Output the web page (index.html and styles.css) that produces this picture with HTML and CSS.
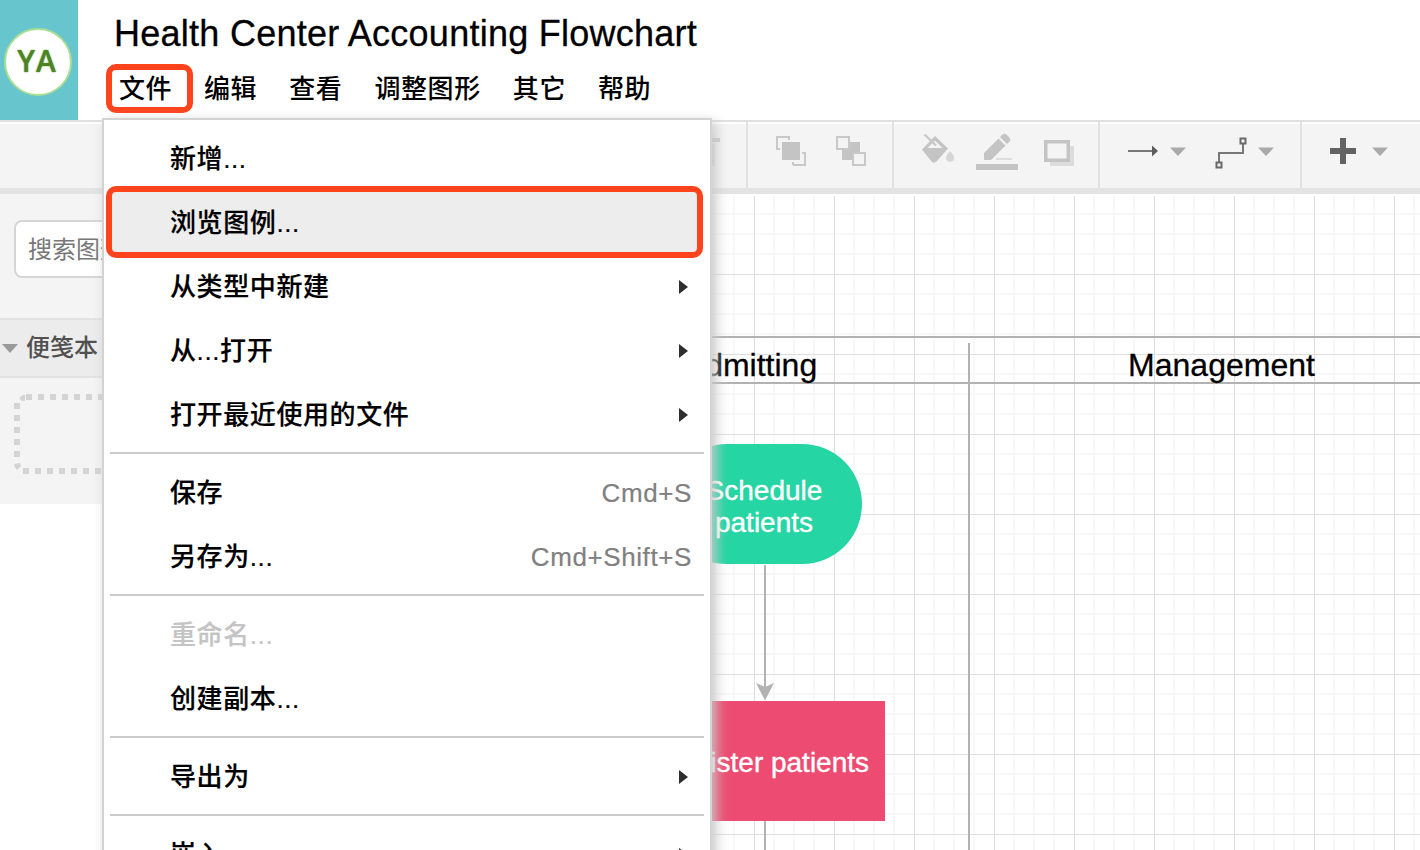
FILE: index.html
```html
<!DOCTYPE html>
<html lang="zh-CN">
<head>
<meta charset="utf-8">
<title>Health Center Accounting Flowchart</title>
<link rel="stylesheet" href="styles.css">
</head>
<body>
<div class="app">
  <header class="header">
    <div class="logo"><span class="avatar">YA</span></div>
    <div class="heading">
      <h1 class="title">Health Center Accounting Flowchart</h1>
      <nav class="menubar">
        <span class="menubar-item marked">文件</span>
        <span class="menubar-item">编辑</span>
        <span class="menubar-item">查看</span>
        <span class="menubar-item">调整图形</span>
        <span class="menubar-item">其它</span>
        <span class="menubar-item">帮助</span>
      </nav>
    </div>
  </header>

  <div class="toolbar">
    <div class="group group-edit">
      <svg width="46" height="64" viewBox="700 124 46 64"><path d="M700 138h20v4h-20z" fill="#ccc"/><path d="M702 144h13v22h-13z" fill="#ddd"/></svg>
    </div>
    <div class="group group-order">
      <svg width="144" height="64" viewBox="748 124 144 64" fill="none" stroke="#c8c8c8" stroke-width="2">
        <path d="M789 140v-3h-12v12h3M793 165h12v-12h-3M793 165v-3"/>
        <path d="M782 142h18v18h-18z" fill="#c4c4c4" stroke="none"/>
        <path d="M842 142h18v18h-18z" fill="#c4c4c4" stroke="none"/>
        <path d="M837 137h12v12h-12zM853 153h12v12h-12z" fill="#f4f4f4"/>
      </svg>
    </div>
    <div class="group group-style">
      <svg width="204" height="64" viewBox="894 124 204 64" fill="none">
        <path d="M935 136l13 12.500-11.500 13q-2.500 2-5 0L922 149.500z" fill="#c4c4c4"/>
        <path d="M935 140.500l7.500 7.500h-15z" fill="#f4f4f4"/>
        <path d="M924.500 134.500l11.500 11" stroke="#c8c8c8" stroke-width="2.400"/>
        <path d="M950 151c2.500 3 4 4.500 4 6.800a4 4 0 0 1-8 0c0-2.300 1.500-3.800 4-6.800z" fill="#d6d6d6"/>
        <path d="M984 160v-7l14.500-14.500 7 7L991 160zM1000 137l2.500-2.500q2-1.500 4 0l3 3q1.500 2 0 4L1007 144z" fill="#c4c4c4"/>
        <path d="M996 158h16v2h-16z" fill="#ddd"/>
        <path d="M976 164h42v6h-42z" fill="#c4c4c4"/>
        <path d="M1050 146h24v20h-24z" fill="#dcdcdc"/>
        <path d="M1045.750 141.750h22.500v18.500h-22.500z" fill="#f4f4f4" stroke="#c4c4c4" stroke-width="3.500"/>
      </svg>
    </div>
    <div class="group group-edge">
      <svg width="200" height="64" viewBox="1100 124 200 64" fill="none" stroke="#777" stroke-width="2">
        <path d="M1128 151h26"/><path d="M1152 145.500l6 5.500-6 5.500z" fill="#5d5d5d" stroke="none"/>
        <path d="M1170 147.500h16l-8 8.500zM1258 147.500h16l-8 8.500z" fill="#aaa" stroke="none"/>
        <path d="M1219 162v-9h24v-9"/>
        <path d="M1240.500 138.500h5v5h-5zM1216.500 162.500h5v5h-5z" stroke="#686868"/>
      </svg>
    </div>
    <div class="group group-insert">
      <svg width="118" height="64" viewBox="1302 124 118 64">
        <path d="M1340 138h6v10h10v6h-10v10h-6v-10h-10v-6h10z" fill="#636363"/>
        <path d="M1372 147.500h16l-8 8.500z" fill="#aaa"/>
      </svg>
    </div>
  </div>

  <main class="workspace">
    <aside class="sidebar">
      <div class="search">搜索图形</div>
      <div class="section"><svg class="caret" width="16" height="9" viewBox="0 0 16 9"><path d="M0 0h16L8 9z" fill="#999"/></svg><span>便笺本</span></div>
      <div class="scratchpad">
        <svg width="400" height="80" viewBox="14 394 400 80" fill="none" stroke="#d4d4d4" stroke-width="6">
          <path d="M26 397H410" stroke-dasharray="6"/>
          <path d="M23 471H410" stroke-dasharray="6"/>
          <path d="M17 403V462" stroke-dasharray="6"/>
          <path d="M19 398l4-3 2 0v6h-3zM14 464l6-1 1 3-4 4q-3-3-3-6z" fill="#d4d4d4" stroke="none"/>
        </svg>
      </div>
    </aside>
    <svg class="canvas" width="996" height="656" viewBox="424 194 996 656">
      <defs>
        <pattern id="grid" x="754" y="274" width="80" height="80" patternUnits="userSpaceOnUse">
          <path d="M20 0v80M40 0v80M60 0v80M0 20h80M0 40h80M0 60h80" stroke="#f8f8f8" stroke-width="2"/>
          <path d="M.5 0v80M0 .5h80" stroke="#dedede"/>
        </pattern>
      </defs>
      <rect x="424" y="196" width="996" height="654" fill="url(#grid)"/>
      <path d="M424 337H1420M424 383H1420M969 343V850" stroke="#b2b2b2" stroke-width="2"/>
      <g class="lane-title">
        <text x="750.500" y="376">Admitting</text>
        <text x="1221.500" y="376">Management</text>
      </g>
      <path d="M765 565V690M765 821V850" stroke="#b2b2b2" stroke-width="2"/>
      <path d="M756 683l9 4 9-4-9 17.500z" fill="#b2b2b2"/>
      <rect x="667" y="444" width="195" height="120" rx="60" fill="#25d5a4"/>
      <rect x="645" y="701" width="240" height="120" fill="#ed4b71"/>
      <g class="node-label">
        <text x="764" y="500">Schedule</text>
        <text x="764" y="532">patients</text>
        <text x="764" y="772">Register patients</text>
      </g>
    </svg>
  </main>

  <div class="menu">
    <div class="item"><span>新增...</span></div>
    <div class="item active"><span>浏览图例...</span></div>
    <div class="item"><span>从类型中新建</span><i class="arrow"></i></div>
    <div class="item"><span>从...打开</span><i class="arrow"></i></div>
    <div class="item"><span>打开最近使用的文件</span><i class="arrow"></i></div>
    <hr class="rule">
    <div class="item"><span>保存</span><kbd class="key">Cmd+S</kbd></div>
    <div class="item"><span>另存为...</span><kbd class="key">Cmd+Shift+S</kbd></div>
    <hr class="rule">
    <div class="item disabled"><span>重命名...</span></div>
    <div class="item"><span>创建副本...</span></div>
    <hr class="rule">
    <div class="item"><span>导出为</span><i class="arrow"></i></div>
    <hr class="rule">
    <div class="item"><span>嵌入</span><i class="arrow"></i></div>
  </div>
</div>
</body>
</html>
```
FILE: styles.css
```css
* { box-sizing: border-box; }
body {
  margin: 0;
  font-family: "Liberation Sans", "Noto Sans CJK SC", sans-serif;
  background: #fff;
  color: #000;
}
.app {
  position: relative;
  width: 1420px;
  height: 850px;
  overflow: hidden;
  display: flex;
  flex-direction: column;
}
.header { display: flex; height: 120px; flex: none; }
.logo {
  width: 78px;
  padding: 28px 0 0 4px;
  background: #66c5cd;
}
.avatar {
  display: flex;
  align-items: center;
  justify-content: center;
  width: 68px;
  height: 68px;
  padding: 0 2px 3px 0;
  border-radius: 50%;
  border: 2px solid #a9df94;
  background: #fff;
  color: transparent;
  text-shadow: 0 0 1.5px #4c8322, 0 0 .5px #5b8f33;
  font: 600 30px "Open Sans", sans-serif;
  letter-spacing: 1px;
}
.heading { padding: 12px 0 0 28px; }
.title {
  margin: 0 0 0 8px;
  font-size: 36px;
  font-weight: 400;
  line-height: 44px;
  letter-spacing: .26px;
  -webkit-text-stroke: .3px #000;
}
.menubar {
  display: flex;
  align-items: center;
  height: 49px;
  margin-top: 8px;
}
.menubar-item {
  margin-right: 32px;
  padding-top: 2px;
  font-size: 26px;
  font-weight: 500;
  line-height: 37px;
  letter-spacing: .6px;
}
.menubar-item.marked {
  width: 87px;
  height: 49px;
  margin-right: 11px;
  padding: 1px 0 0 7px;
  border: 6px solid #ff431c;
  border-radius: 10px;
}
.toolbar {
  display: flex;
  flex: none;
  height: 74px;
  border-top: 2px solid #e0e0e0;
  border-bottom: 6px solid #e3e3e3;
  background: linear-gradient(#fff 2px, #f4f4f4 2px);
}
.group { padding-top: 2px; border-right: 2px solid #e2e2e2; }
.group-edit { width: 748px; padding-left: 700px; }
.group-order { width: 146px; }
.group-style { width: 206px; }
.group-edge { width: 202px; }
.group-insert { width: 118px; border-right: 0; }
.group svg { display: block; }
.workspace { display: flex; flex: 1; }
.sidebar {
  width: 424px;
  height: 310px;
  padding-top: 26px;
  background: #f4f4f4;
}
.search {
  height: 58px;
  margin: 0 14px 40px;
  padding: 1px 0 0 12px;
  border: 2px solid #d5d5d5;
  border-radius: 8px;
  background: #fff;
  color: #777;
  font-size: 24px;
  line-height: 54px;
}
.section {
  display: flex;
  align-items: center;
  gap: 8px;
  height: 60px;
  padding: 0 0 5px 2px;
  border: solid #e2e2e2;
  border-width: 2px 0;
  background: #ececec;
  color: #505050;
  font-size: 24px;
  font-weight: 500;
}
.caret { margin-top: 5px; }
.scratchpad { padding: 16px 0 0 14px; }
.scratchpad svg { display: block; }
.canvas { display: block; }
.canvas text { text-anchor: middle; }
.lane-title { font-size: 32px; stroke: #000; stroke-width: .3px; }
.node-label { font-size: 28px; fill: #fff; stroke: #fff; stroke-width: .4px; }
/* File menu, opened over the toolbar, sidebar and canvas */
.menu {
  position: absolute;
  left: 102px;
  top: 118px;
  width: 610px;
  height: 780px;
  padding-top: 6px;
  border: 2px solid #d3d3d3;
  background: #fff;
  box-shadow: 4px 4px 12px #c8c8c8;
}
.item {
  display: flex;
  align-items: center;
  justify-content: space-between;
  height: 64px;
  padding: 2px 18px 0 66px;
  font-size: 26px;
  font-weight: 500;
  line-height: 62px;
  letter-spacing: .6px;
}
.item span { -webkit-text-stroke: .2px; }
.item.active {
  width: 597px;
  height: 72px;
  margin: -4px 0 -4px 2px;
  padding-left: 58px;
  border: 6px solid #ff431c;
  border-radius: 10px;
  background: #ededed;
}
.item.disabled { color: #c4c4c4; }
.key { font: 400 26px "Liberation Sans", sans-serif; letter-spacing: .6px; color: #808080; -webkit-text-stroke: .2px #808080; }
.arrow {
  margin-right: 4px;
  border: solid transparent;
  border-width: 7.5px 0 7.5px 9px;
  border-left-color: #2e2e2e;
}
.rule {
  height: 2px;
  margin: 6px;
  border: 0;
  background: #ccc;
}
```
